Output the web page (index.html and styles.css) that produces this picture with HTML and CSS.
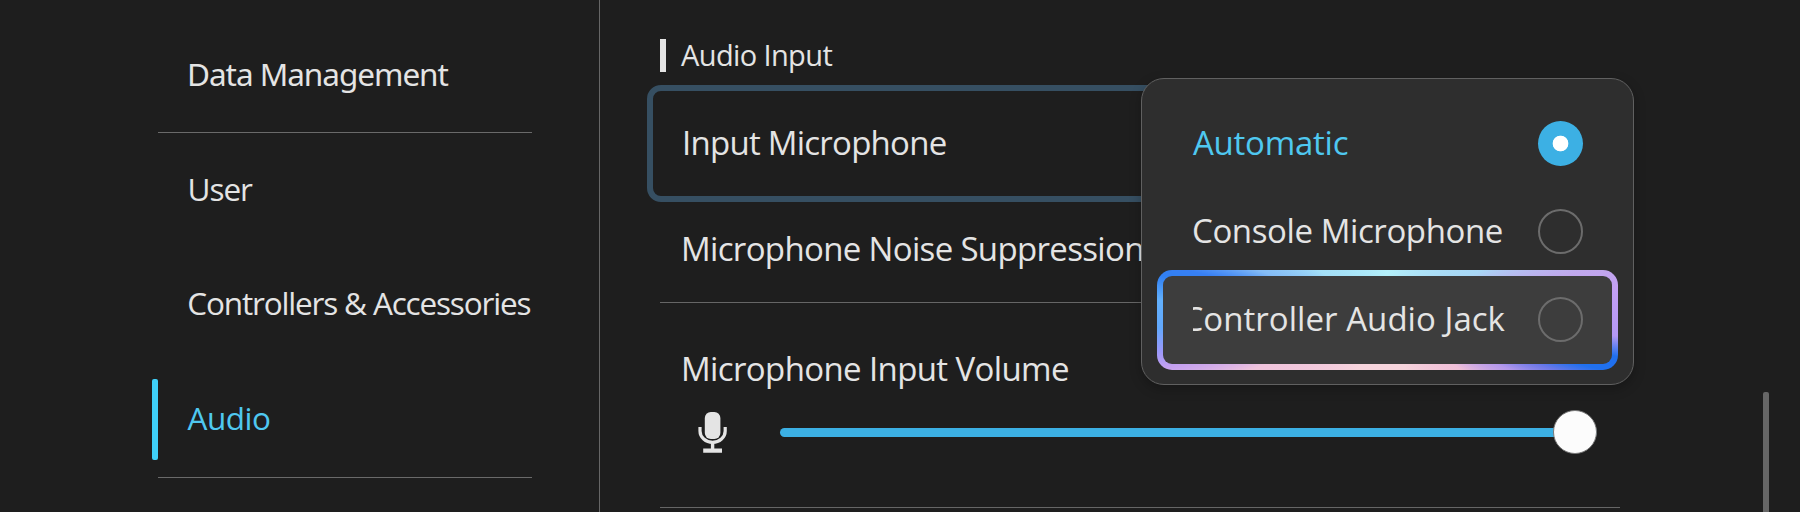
FILE: index.html
```html
<!DOCTYPE html>
<html lang="en">
<head>
<meta charset="utf-8">
<title>Audio Settings</title>
<link rel="stylesheet" href="styles.css">
</head>
<body>
<nav class="sidebar">
  <div class="nav-item nav-first"><span class="label t-data">Data Management</span></div>
  <div class="nav-group">
    <div class="nav-item"><span class="label t-user">User</span></div>
    <div class="nav-item"><span class="label t-controllers">Controllers &amp; Accessories</span></div>
    <div class="nav-item active"><span class="label t-audio">Audio</span></div>
  </div>
</nav>
<main class="content">
  <h2 class="heading"><span class="label t-heading">Audio Input</span></h2>
  <div class="row row-input"><span class="label t-input">Input Microphone</span></div>
  <div class="row row-noise"><span class="label t-noise">Microphone Noise Suppression</span></div>
  <div class="row row-volume">
    <span class="label t-volume">Microphone Input Volume</span>
    <div class="slider">
      <svg class="mic" width="30" height="42" viewBox="0 0 30 42">
        <rect x="6.8" y="1" width="15.6" height="27" rx="6" fill="#e4e4e4"/>
        <path d="M2 16v4a12.6 11.4 0 0 0 25.2 0V16" fill="none" stroke="#e4e4e4" stroke-width="3.2"/>
        <path d="M12.9 32h3.4v5.5h7.7v4.2H5.2v-4.2h7.7z" fill="#e4e4e4"/>
      </svg>
      <div class="track"><div class="knob"></div></div>
    </div>
  </div>
</main>
<div class="scrollbar"></div>
<div class="popup">
  <div class="option selected"><span class="label t-auto">Automatic</span><span class="radio on"></span></div>
  <div class="option"><span class="label t-console">Console Microphone</span><span class="radio"></span></div>
  <div class="option focused"><span class="clip"><span class="label t-jack">Controller Audio Jack</span></span><span class="radio"></span></div>
</div>
</body>
</html>
```
FILE: styles.css
```css
* { box-sizing: border-box; }

body {
  margin: 0;
  position: relative;
  display: flex;
  width: 1800px;
  height: 512px;
  overflow: hidden;
  background: #1e1e1e;
  color: #e4e4e4;
  font-family: "Open Sans", "Noto Sans", sans-serif;
  font-weight: 400;
}

.label { white-space: nowrap; }

/* Sidebar */
.sidebar {
  width: 600px;
  height: 512px;
  padding: 14px 67px 0 152px;
  border-right: 1px solid #666;
  font-size: 31.5px;
}
.nav-item {
  display: flex;
  align-items: center;
  height: 114.6px;
  padding: 0 0 4px 36px;
}
.nav-first { height: 118px; padding-bottom: 0; }
.nav-group {
  position: relative;
  height: 345px;
}
.nav-group::before,
.nav-group::after {
  content: "";
  display: block;
  height: 1px;
  margin-left: 6px;
  background: #6a6a6a;
}
.nav-item.active {
  position: relative;
  color: #4fc8f0;
}
.nav-item.active::before {
  content: "";
  position: absolute;
  left: 0;
  top: 17px;
  width: 6px;
  height: 81px;
  border-radius: 2px;
  background: #3fd0f8;
}

/* Settings list */
.content {
  width: 1020px;
  padding: 39px 0 0 47px;
}
.heading {
  display: flex;
  align-items: center;
  height: 33px;
  margin: 0 0 13px 13px;
  padding: 0 0 2px 15px;
  border-left: 6px solid #e4e4e4;
  font-size: 29px;
  font-weight: inherit;
}
.row { font-size: 33px; }
.row-input {
  display: flex;
  align-items: center;
  height: 117px;
  padding: 0 0 2px 29px;
  border: 6px solid #364f62;
  border-radius: 14px;
}
.row-noise {
  display: flex;
  align-items: center;
  height: 101px;
  margin-left: 13px;
  padding: 0 0 8px 21px;
  border-bottom: 1px solid #666;
}
.row-volume {
  height: 205px;
  margin-left: 13px;
  padding: 41px 0 0 21px;
  border-bottom: 1px solid #666;
  line-height: 50px;
}
.slider {
  display: flex;
  align-items: center;
  height: 44px;
  margin-top: 16px;
}
.mic { margin-left: 17px; }
.track {
  display: flex;
  align-items: center;
  justify-content: flex-end;
  width: 817px;
  height: 9px;
  margin-left: 52px;
  border-radius: 5px;
  background: #3cb0e4;
}
.knob {
  width: 44px;
  height: 44px;
  border: 1px solid #777;
  border-radius: 50%;
  background: #fcfcfc;
}

.scrollbar {
  width: 6px;
  height: 120px;
  margin: 392px 0 0 143px;
  border-radius: 2px 2px 0 0;
  background: #666;
}

/* Dropdown over the list */
.popup {
  position: absolute;
  left: 1141px;
  top: 78px;
  width: 493px;
  height: 307px;
  padding: 20px 15px 0;
  border: 1px solid #606060;
  border-radius: 23px;
  background: #2e2e2e;
  box-shadow: 0 4px 12px rgba(0, 0, 0, .25);
  font-size: 33px;
}
.option {
  display: flex;
  align-items: center;
  justify-content: space-between;
  height: 88px;
  padding: 0 35.5px 0 36px;
}
.option .label { margin-top: -2px; }
.selected { color: #4fc8f0; }
.radio {
  flex: none;
  width: 45px;
  height: 45px;
  border: 2px solid #6c6c6c;
  border-radius: 50%;
}
.radio.on {
  border: 0;
  background: radial-gradient(circle, #fff 7.5px, #3cb0e4 8.2px);
}
.focused {
  height: 100px;
  margin-top: -5px;
  padding: 0 29.5px 1px 30px;
  border: 6px solid transparent;
  border-radius: 15px;
  background:
    linear-gradient(#3d3d3d, #3d3d3d) padding-box,
    conic-gradient(#b4f0fa 0deg, #a8d8f6 62deg, #c0a8ec 76deg, #c4a0f4 82deg, #b498f4 94deg, #2070ee 99deg, #2070ee 103deg, #6c78e8 106.5deg, #b498ec 112deg, #f0c0d8 124deg, #f6d4dc 160deg, #f6d4dc 210deg, #f0c4dc 250deg, #c4a0f0 258deg, #9c98fa 262deg, #62a8fc 268deg, #62b0fc 275deg, #3080f4 281deg, #3880f4 284deg, #84bcf6 291deg, #a4e0f8 306deg, #b4f0fa 360deg) border-box;
}
.clip {
  display: flex;
  justify-content: flex-end;
  width: 312px;
  overflow: hidden;
}
.focused .label { margin-top: -2px; }

/* Per-label tracking and side bearing */
.t-data {
  margin-left: -1px;
  font-family: "Noto Sans", sans-serif;
  letter-spacing: -1.04px;
}
.t-user { margin-left: -.5px; letter-spacing: -1.05px; }
.t-controllers { margin-left: -.7px; letter-spacing: -1.17px; }
.t-audio { margin-left: -.5px; letter-spacing: -.5px; }
.t-heading { letter-spacing: -.62px; }
.t-input { letter-spacing: -.75px; }
.t-noise { letter-spacing: -.66px; }
.t-volume { letter-spacing: -.62px; }
.t-auto { letter-spacing: -.25px; }
.t-console { margin-left: -1px; letter-spacing: -.4px; }
.t-jack { letter-spacing: .04px; }
```
